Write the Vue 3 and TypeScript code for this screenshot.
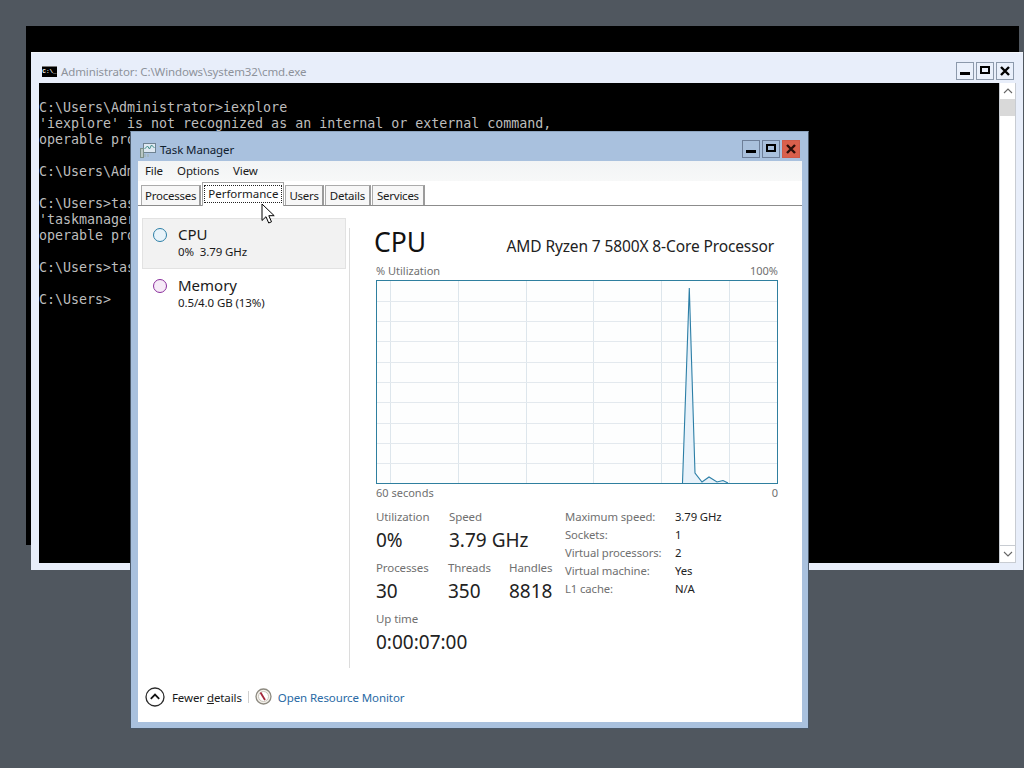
<script setup lang="ts">
const consoleLines: string[] = [
  'C:\\Users\\Administrator>iexplore',
  "'iexplore' is not recognized as an internal or external command,",
  'operable pro',
  '',
  'C:\\Users\\Adm',
  '',
  'C:\\Users>tas',
  "'taskmanager",
  'operable pro',
  '',
  'C:\\Users>tas',
  '',
  'C:\\Users>',
]
const tabs = ['Processes', 'Performance', 'Users', 'Details', 'Services']
const menus = ['File', 'Options', 'View']
const vGrid = [14, 82, 150, 217, 285, 353]
const hGrid = [21, 41, 61, 82, 102, 122, 143, 163, 183]
const specs = [
  ['Maximum speed:', '3.79 GHz'],
  ['Sockets:', '1'],
  ['Virtual processors:', '2'],
  ['Virtual machine:', 'Yes'],
  ['L1 cache:', 'N/A'],
]
</script>

<template>
  <div class="desktop">
    <div class="backdrop"></div>

    <section class="cmd">
      <header class="cmd-title">
        <span class="cmd-icon">C:\_</span>
        <span class="cmd-name">Administrator: C:\Windows\system32\cmd.exe</span>
        <div class="win-btns">
          <button class="wbtn"><i class="g-min"></i></button>
          <button class="wbtn"><i class="g-max"></i></button>
          <button class="wbtn">
            <svg width="12" height="12" viewBox="0 0 12 12"><path d="M2 2l8 8M10 2l-8 8" stroke="#000" stroke-width="2.4" /></svg>
          </button>
        </div>
      </header>
      <div class="cmd-body">
        <div class="console">
          <div v-for="(l, i) in consoleLines" :key="i" class="cline">{{ l }}</div>
        </div>
        <div class="scrollbar">
          <div class="sb-btn">
            <svg width="10" height="6" viewBox="0 0 10 6"><path d="M1 5l4-4 4 4" fill="none" stroke="#666" stroke-width="1.1" /></svg>
          </div>
          <div class="sb-thumb"></div>
          <div class="sb-track"></div>
          <div class="sb-btn sb-down">
            <svg width="10" height="6" viewBox="0 0 10 6"><path d="M1 1l4 4 4-4" fill="none" stroke="#666" stroke-width="1.1" /></svg>
          </div>
        </div>
      </div>
    </section>

    <section class="tm">
      <header class="tm-title">
        <svg class="tm-icon" width="17" height="16" viewBox="0 0 17 16">
          <rect x="3.5" y="1.5" width="12" height="9" fill="#dfe9f2" stroke="#6f8392" />
          <path d="M4.5 7l3-3 2 3 2-4 3 3" fill="none" stroke="#3f8f8a" />
          <rect x="0.5" y="6.5" width="3" height="9" fill="#b9c7c4" stroke="#7d918c" />
          <path d="M5 12v3M8 12v3" stroke="#9fb0ab" />
        </svg>
        <span class="tm-name">Task Manager</span>
        <div class="win-btns">
          <button class="wbtn tint"><i class="g-min"></i></button>
          <button class="wbtn tint"><i class="g-max"></i></button>
          <button class="wbtn red">
            <svg width="12" height="12" viewBox="0 0 12 12"><path d="M2 2l8 8M10 2l-8 8" stroke="#2a0d08" stroke-width="2.4" /></svg>
          </button>
        </div>
      </header>

      <div class="tm-client">
        <nav class="menubar">
          <span v-for="m in menus" :key="m" class="menu">{{ m }}</span>
        </nav>

        <div class="tabs">
          <span v-for="t in tabs" :key="t" class="tab" :class="{ active: t === 'Performance' }">
            <span class="tab-text">{{ t }}</span>
          </span>
        </div>

        <div class="perf">
          <aside class="side">
            <div class="res selected">
              <span class="dot cpu"></span>
              <div>
                <div class="res-name">CPU</div>
                <div class="res-sub">0%&nbsp; 3.79 GHz</div>
              </div>
            </div>
            <div class="res">
              <span class="dot mem"></span>
              <div>
                <div class="res-name">Memory</div>
                <div class="res-sub">0.5/4.0 GB (13%)</div>
              </div>
            </div>
          </aside>

          <main class="detail">
            <div class="head">
              <h1>CPU</h1>
              <span class="model">AMD Ryzen 7 5800X 8-Core Processor</span>
            </div>
            <div class="axis"><span>% Utilization</span><span>100%</span></div>
            <svg class="graph" width="402" height="204" viewBox="0 0 402 204">
              <rect x="0" y="0" width="402" height="204" fill="#fdfefe" />
              <path v-for="x in vGrid" :key="'v' + x" :d="`M${x}.5 1V203`" stroke="#dde6ec" />
              <path v-for="y in hGrid" :key="'h' + y" :d="`M1 ${y}.5H401`" stroke="#e3e9ee" />
              <path d="M306.5 203L313.3 8L319 193L326 202L333 197L341 202L347 200.5L352 203Z" fill="#e8f2fa" />
              <path d="M306.5 203L313.3 8L319 193L326 202L333 197L341 202L347 200.5L352 203" fill="none" stroke="#2b7ea6" stroke-width="1.1" />
              <rect x="0.5" y="0.5" width="401" height="203" fill="none" stroke="#2f7f9f" />
            </svg>
            <div class="axis low"><span>60 seconds</span><span>0</span></div>

            <div class="stats">
              <div class="live">
                <div class="row">
                  <div class="stat w73"><label>Utilization</label><b>0%</b></div>
                  <div class="stat"><label>Speed</label><b>3.79 GHz</b></div>
                </div>
                <div class="row">
                  <div class="stat w72"><label>Processes</label><b>30</b></div>
                  <div class="stat w61"><label>Threads</label><b>350</b></div>
                  <div class="stat"><label>Handles</label><b>8818</b></div>
                </div>
                <div class="row">
                  <div class="stat"><label>Up time</label><b>0:00:07:00</b></div>
                </div>
              </div>
              <dl class="specs">
                <div v-for="s in specs" :key="s[0]" class="spec">
                  <dt>{{ s[0] }}</dt>
                  <dd>{{ s[1] }}</dd>
                </div>
              </dl>
            </div>
          </main>
        </div>

        <footer class="foot">
          <span class="fewer">
            <svg width="20" height="20" viewBox="0 0 20 20">
              <circle cx="10" cy="10" r="9" fill="#fff" stroke="#2b2b2b" stroke-width="1.3" />
              <path d="M5.8 11.8L10 7.6l4.2 4.2" fill="none" stroke="#111" stroke-width="1.8" />
            </svg>
            <span>Fewer <u>d</u>etails</span>
          </span>
          <span class="foot-sep"></span>
          <svg class="monitor" width="17" height="17" viewBox="0 0 17 17">
            <circle cx="8.5" cy="8.5" r="7.5" fill="#f2efe9" stroke="#8d8a80" stroke-width="1.3" />
            <circle cx="8.5" cy="8.5" r="5" fill="#fff" stroke="#c9c4ba" />
            <path d="M5.5 4.5l4.5 7.5" stroke="#a3263a" stroke-width="1.8" />
          </svg>
          <span class="link">Open Resource Monitor</span>
        </footer>
      </div>
    </section>

    <svg class="cursor" width="14" height="22" viewBox="0 0 14 22">
      <path d="M1 1v16.5l4-3.8 2.7 6.3 2.8-1.2-2.7-6.1h5.4z" fill="#fff" stroke="#000" stroke-width="1" />
    </svg>
  </div>
</template>

<style>
html,
body {
  margin: 0;
  background: #50575f;
}
</style>

<style scoped>
.desktop {
  position: relative;
  width: 1024px;
  height: 768px;
  overflow: hidden;
  background: #50575f;
  font-family: "Noto Sans", "Open Sans", sans-serif;
  font-size: 11.5px;
  letter-spacing: -0.1px;
  color: #1a1a1a;
}
.backdrop {
  position: absolute;
  left: 26px;
  top: 26px;
  width: 993px;
  height: 519px;
  background: #000;
}
.cmd {
  position: absolute;
  left: 31px;
  top: 52px;
  width: 992px;
  height: 518px;
  box-sizing: border-box;
  background: #e8eefa;
  border-top: 1px solid #f4f6fb;
  padding: 0 7px 7px 8px;
  display: flex;
  flex-direction: column;
}
.cmd-title {
  height: 30px;
  display: flex;
  align-items: center;
  flex: none;
}
.cmd-icon {
  width: 15px;
  height: 11px;
  flex: none;
  margin: 7px 4px 0 3px;
  background: #000;
  color: #fff;
  font: bold 6px/10px "Liberation Mono", monospace;
  letter-spacing: 0;
  text-align: center;
  white-space: nowrap;
  border-top: 1px solid #777;
  box-sizing: border-box;
}
.cmd-name {
  margin-top: 7px;
  color: #8d929a;
}
.win-btns {
  margin-left: auto;
  display: flex;
  gap: 2px;
  margin-top: 6px;
  margin-right: 2px;
}
.wbtn {
  width: 18px;
  height: 18px;
  padding: 0;
  box-sizing: border-box;
  border: 1px solid #8c99ab;
  background: #eaf0fb;
  display: flex;
  align-items: center;
  justify-content: center;
  position: relative;
}
.wbtn.tint {
  background: #a9c0dc;
  border-color: #6d7e98;
}
.wbtn.red {
  background: #d9604c;
  border-color: #cf5a48;
}
.g-min {
  width: 10px;
  height: 3px;
  background: #000;
  margin-top: 5px;
}
.g-max {
  width: 10px;
  height: 8px;
  box-sizing: border-box;
  border: 2px solid #000;
  margin-top: -2px;
}
.cmd-body {
  flex: 1;
  min-height: 0;
  display: flex;
  background: #000;
}
.console {
  flex: 1;
  padding-top: 17px;
  font: 13.33px/16px "DejaVu Sans Mono", "Liberation Mono", monospace;
  letter-spacing: -0.02px;
  color: #bdbdbd;
  overflow: hidden;
}
.cline {
  height: 16px;
  white-space: pre;
}
.scrollbar {
  width: 17px;
  background: #fff;
  border: 1px solid #c8ccd2;
  border-width: 0 1px 1px 1px;
  box-sizing: border-box;
  display: flex;
  flex-direction: column;
}
.sb-btn {
  height: 16px;
  flex: none;
  display: flex;
  align-items: center;
  justify-content: center;
}
.sb-thumb {
  height: 17px;
  background: #d9d9d9;
  flex: none;
}
.sb-track {
  flex: 1;
}
.sb-down {
  border-top: 1px solid #c8ccd2;
}

.tm {
  position: absolute;
  left: 130px;
  top: 131px;
  width: 679px;
  height: 598px;
  box-sizing: border-box;
  background: #a9c1de;
  border: 1px solid #4a5868;
  border-top-color: #8ea5c0;
  padding: 0 6px 6px 7px;
  display: flex;
  flex-direction: column;
}
.tm-title {
  height: 29px;
  flex: none;
  display: flex;
  align-items: center;
}
.tm-icon {
  margin: 7px 3px 0 2px;
}
.tm-name {
  margin-top: 6px;
  color: #10202e;
}
.tm .win-btns {
  margin-top: 5px;
  margin-right: 2px;
}
.tm-client {
  flex: 1;
  min-height: 0;
  background: #fff;
  display: flex;
  flex-direction: column;
}
.menubar {
  height: 20px;
  flex: none;
  box-sizing: border-box;
  padding: 0 0 1px 7px;
  background: linear-gradient(#f2f4f5, #f7f8f8);
  display: flex;
  align-items: center;
  gap: 14px;
}
.tabs {
  height: 25px;
  flex: none;
  display: flex;
  align-items: flex-end;
  gap: 1px;
  padding-left: 3px;
  border-bottom: 1px solid #8c8c8c;
  box-sizing: border-box;
}
.tab {
  height: 20px;
  box-sizing: border-box;
  border: 1px solid #ababab;
  border-bottom: 0;
  border-right: 2px solid #9b9b9b;
  background: #f7f7f7;
  padding: 0 3px;
  letter-spacing: -0.25px;
  display: flex;
  align-items: center;
}
.tab:nth-child(4),
.tab:nth-child(5) {
  padding: 0 4px;
}
.tab.active {
  height: 24px;
  background: #fff;
  border: 1px solid #a5a5a5;
  border-bottom: 0;
  margin-bottom: -1px;
  padding: 1px 2px 3px;
  letter-spacing: 0;
  position: relative;
}
.tab.active .tab-text {
  outline: 1px dotted #222;
  outline-offset: 0;
  padding: 0 3px 1px;
}
.perf {
  flex: 1;
  min-height: 0;
  display: flex;
}
.side {
  width: 212px;
  height: 450px;
  margin-top: 12px;
  box-sizing: border-box;
  padding: 0 3px 0 4px;
  border-right: 1px solid #dcdcdc;
  flex: none;
  position: relative;
}
.side::after {
  content: "";
  position: absolute;
  right: -1px;
  top: 0;
  height: 10px;
  width: 1px;
  background: #fff;
}
.res {
  height: 51px;
  box-sizing: border-box;
  display: flex;
  gap: 11px;
  padding: 5px 0 0 10px;
  border: 1px solid transparent;
}
.res.selected {
  background: #f2f2f2;
  border-color: #e2e2e2;
}
.dot {
  width: 14px;
  height: 14px;
  box-sizing: border-box;
  border-radius: 50%;
  margin-top: 4px;
  border: 1.3px solid;
}
.dot.cpu {
  border-color: #2b7ea6;
  background: #e8f3fa;
}
.dot.mem {
  border-color: #8b2f9c;
  background: #f6eaf7;
}
.res-name {
  font-size: 15px;
  letter-spacing: 0;
  line-height: 20px;
}
.res-sub {
  font-size: 11.5px;
  line-height: 15px;
}
.detail {
  width: 402px;
  margin-left: 26px;
  padding-top: 19px;
  flex: none;
}
.head {
  display: flex;
  align-items: center;
  justify-content: space-between;
  height: 34px;
}
.head h1 {
  margin: 0 0 0 -2px;
  font-size: 26.5px;
  letter-spacing: 0;
  line-height: 34px;
  font-weight: 400;
  color: #111;
}
.model {
  font-size: 15.5px;
  color: #222;
  margin: 8px 4px 0 0;
  letter-spacing: -0.12px;
}
.axis {
  height: 17px;
  box-sizing: border-box;
  padding-bottom: 2px;
  margin-top: 4px;
  display: flex;
  justify-content: space-between;
  align-items: center;
  font-size: 11px;
  letter-spacing: 0;
  color: #707070;
}
.axis.low {
  margin-top: 0;
  padding-bottom: 0;
}
.graph {
  display: block;
}
.stats {
  display: flex;
  margin-top: 7px;
}
.live {
  width: 189px;
  flex: none;
}
.row {
  display: flex;
  height: 51px;
}
.stat {
  display: flex;
  flex-direction: column;
}
.w73 {
  width: 73px;
}
.w72 {
  width: 72px;
}
.w61 {
  width: 61px;
}
.stat label {
  line-height: 18px;
  color: #707070;
}
.stat b {
  font-weight: 400;
  font-size: 19px;
  letter-spacing: 0;
  line-height: 28px;
  color: #222;
  white-space: nowrap;
}
.specs {
  margin: 0;
}
.spec {
  display: flex;
  height: 18px;
  line-height: 18px;
  font-size: 11.3px;
}
.spec dt {
  width: 110px;
  color: #707070;
}
.spec dd {
  margin: 0;
  color: #222;
}
.foot {
  height: 48px;
  box-sizing: border-box;
  padding: 0 0 2px 7px;
  flex: none;
  display: flex;
  align-items: center;
}
.fewer {
  display: flex;
  align-items: center;
  gap: 7px;
}
.foot-sep {
  width: 1px;
  height: 12px;
  background: #cfcfcf;
  margin: 0 6px;
}
.monitor {
  margin: -1px 6px 0 0;
}
.link {
  color: #2a6aa5;
}
.cursor {
  position: absolute;
  left: 261px;
  top: 203px;
}
</style>
